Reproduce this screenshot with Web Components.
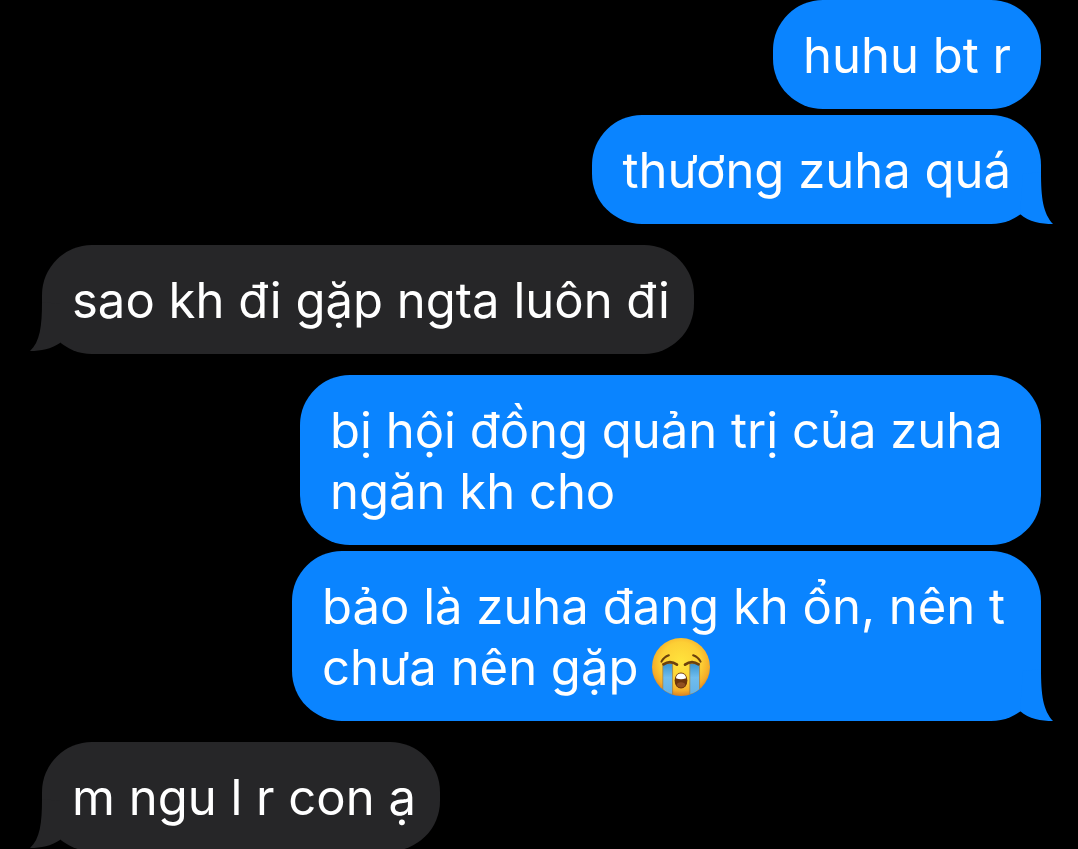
<!DOCTYPE html>
<html lang="vi">
<head>
<meta charset="utf-8">
<meta name="viewport" content="width=device-width, initial-scale=1">
<title>Messages</title>
<style>
  html { background: #000; scrollbar-width: none; }
  body { margin: 0; font-family: Inter, "Noto Sans", sans-serif; color: #fff; }
</style>
</head>
<body>
<chat-thread>
  <chat-group side="sent">
    <chat-bubble side="sent">huhu bt r</chat-bubble>
    <chat-bubble side="sent" tail>thương zuha quá</chat-bubble>
  </chat-group>
  <chat-group side="received">
    <chat-bubble side="received" tail>sao kh đi gặp ngta luôn đi</chat-bubble>
  </chat-group>
  <chat-group side="sent">
    <chat-bubble side="sent" style="--bubble-max: 741px">bị hội đồng quản trị của zuha ngăn kh cho</chat-bubble>
    <chat-bubble side="sent" tail style="--bubble-max: 749px">bảo là zuha đang kh ổn, nên t chưa nên gặp <crying-emoji></crying-emoji></chat-bubble>
  </chat-group>
  <chat-group side="received">
    <chat-bubble side="received" tail>m ngu l r con ạ</chat-bubble>
  </chat-group>
</chat-thread>

<script>
class ShadowElement extends HTMLElement {
  constructor() {
    super();
    this.attachShadow({ mode: "open" }).innerHTML = this.constructor.markup;
  }
}

customElements.define("chat-thread", class extends ShadowElement {
  static markup = `
    <style>
      :host { display: flex; flex-direction: column; gap: 21px; padding: 0 37px 0 42px; }
    </style>
    <slot></slot>`;
});

customElements.define("chat-group", class extends ShadowElement {
  static markup = `
    <style>
      :host { display: flex; flex-direction: column; gap: 6px; align-items: flex-start; }
      :host([side="sent"]) { align-items: flex-end; }
    </style>
    <slot></slot>`;
});

customElements.define("chat-bubble", class extends ShadowElement {
  static markup = `
    <style>
      :host {
        --fill: #262628;
        display: block;
        position: relative;
        box-sizing: border-box;
        max-width: var(--bubble-max, 75%);
        padding: 25px 24px 23px 30px;
        border-radius: 50px;
        background: var(--fill);
        font-size: 49px;
        line-height: 61px;
      }
      :host([side="sent"]) { --fill: #0a84ff; padding-right: 30px; }
      p { margin: 0; }
      svg { display: none; position: absolute; bottom: 0; width: 50px; height: 64px; fill: var(--fill); }
      :host([tail]) svg { display: none; }
      :host([tail][side="sent"]) .right { display: block; right: -12px; }
      :host([tail][side="received"]) .left { display: block; left: -12px; }
    </style>
    <p><slot></slot></p>
    <svg class="right" viewBox="0 0 50 64" aria-hidden="true">
      <path d="M20 14 L38 12 C38 38 40 53 50 64 C38 64 26 62 17 54 Z"/>
    </svg>
    <svg class="left" viewBox="0 0 50 64" aria-hidden="true">
      <path d="M30 14 L12 12 C12 36 10 52 0 61 C11 61 21 59 30 53 Z"/>
    </svg>`;
});

customElements.define("crying-emoji", class extends ShadowElement {
  static markup = `
    <style>
      :host { display: inline-block; vertical-align: -11px; width: 58px; height: 58px; line-height: 0; }
      svg { width: 100%; height: 100%; }
    </style>
    <svg viewBox="0 0 172 172" role="img" aria-label="😭">
      <defs>
        <radialGradient id="face" cx="50%" cy="42%" r="58%">
          <stop offset="0" stop-color="#ffe43c"/><stop offset=".6" stop-color="#fdcf35"/>
          <stop offset=".85" stop-color="#f5ad2a"/><stop offset="1" stop-color="#db8120"/>
        </radialGradient>
        <linearGradient id="tear" x1="0" y1="0" x2="0" y2="1">
          <stop offset="0" stop-color="#3995d0"/><stop offset=".45" stop-color="#70bdee"/>
          <stop offset="1" stop-color="#62b1e8"/>
        </linearGradient>
        <clipPath id="disc"><circle cx="86" cy="86" r="86"/></clipPath>
      </defs>
      <circle cx="86" cy="86" r="86" fill="url(#face)"/>
      <g clip-path="url(#disc)">
        <path d="M32 76H61V168Q45 165 32 153Z" fill="url(#tear)" stroke="#a77933" stroke-width="2"/>
        <path d="M112 76H141V153Q128 165 112 168Z" fill="url(#tear)" stroke="#a77933" stroke-width="2"/>
      </g>
      <g fill="none" stroke="#6b410d" stroke-linecap="round">
        <path d="M28 70Q35 56 50 51M122 51Q137 56 144 70" stroke-width="6"/>
        <path d="M34 78Q54 64 74 79M98 79Q118 64 138 78" stroke-width="8"/>
      </g>
      <ellipse cx="86" cy="126" rx="19" ry="24" fill="#6c340c"/>
      <path d="M71 119Q72 105 86 105Q100 105 101 119Q86 125 71 119Z" fill="#fff"/>
      <ellipse cx="86" cy="139" rx="12" ry="8" fill="#925020"/>
    </svg>`;
});
</script>
</body>
</html>
